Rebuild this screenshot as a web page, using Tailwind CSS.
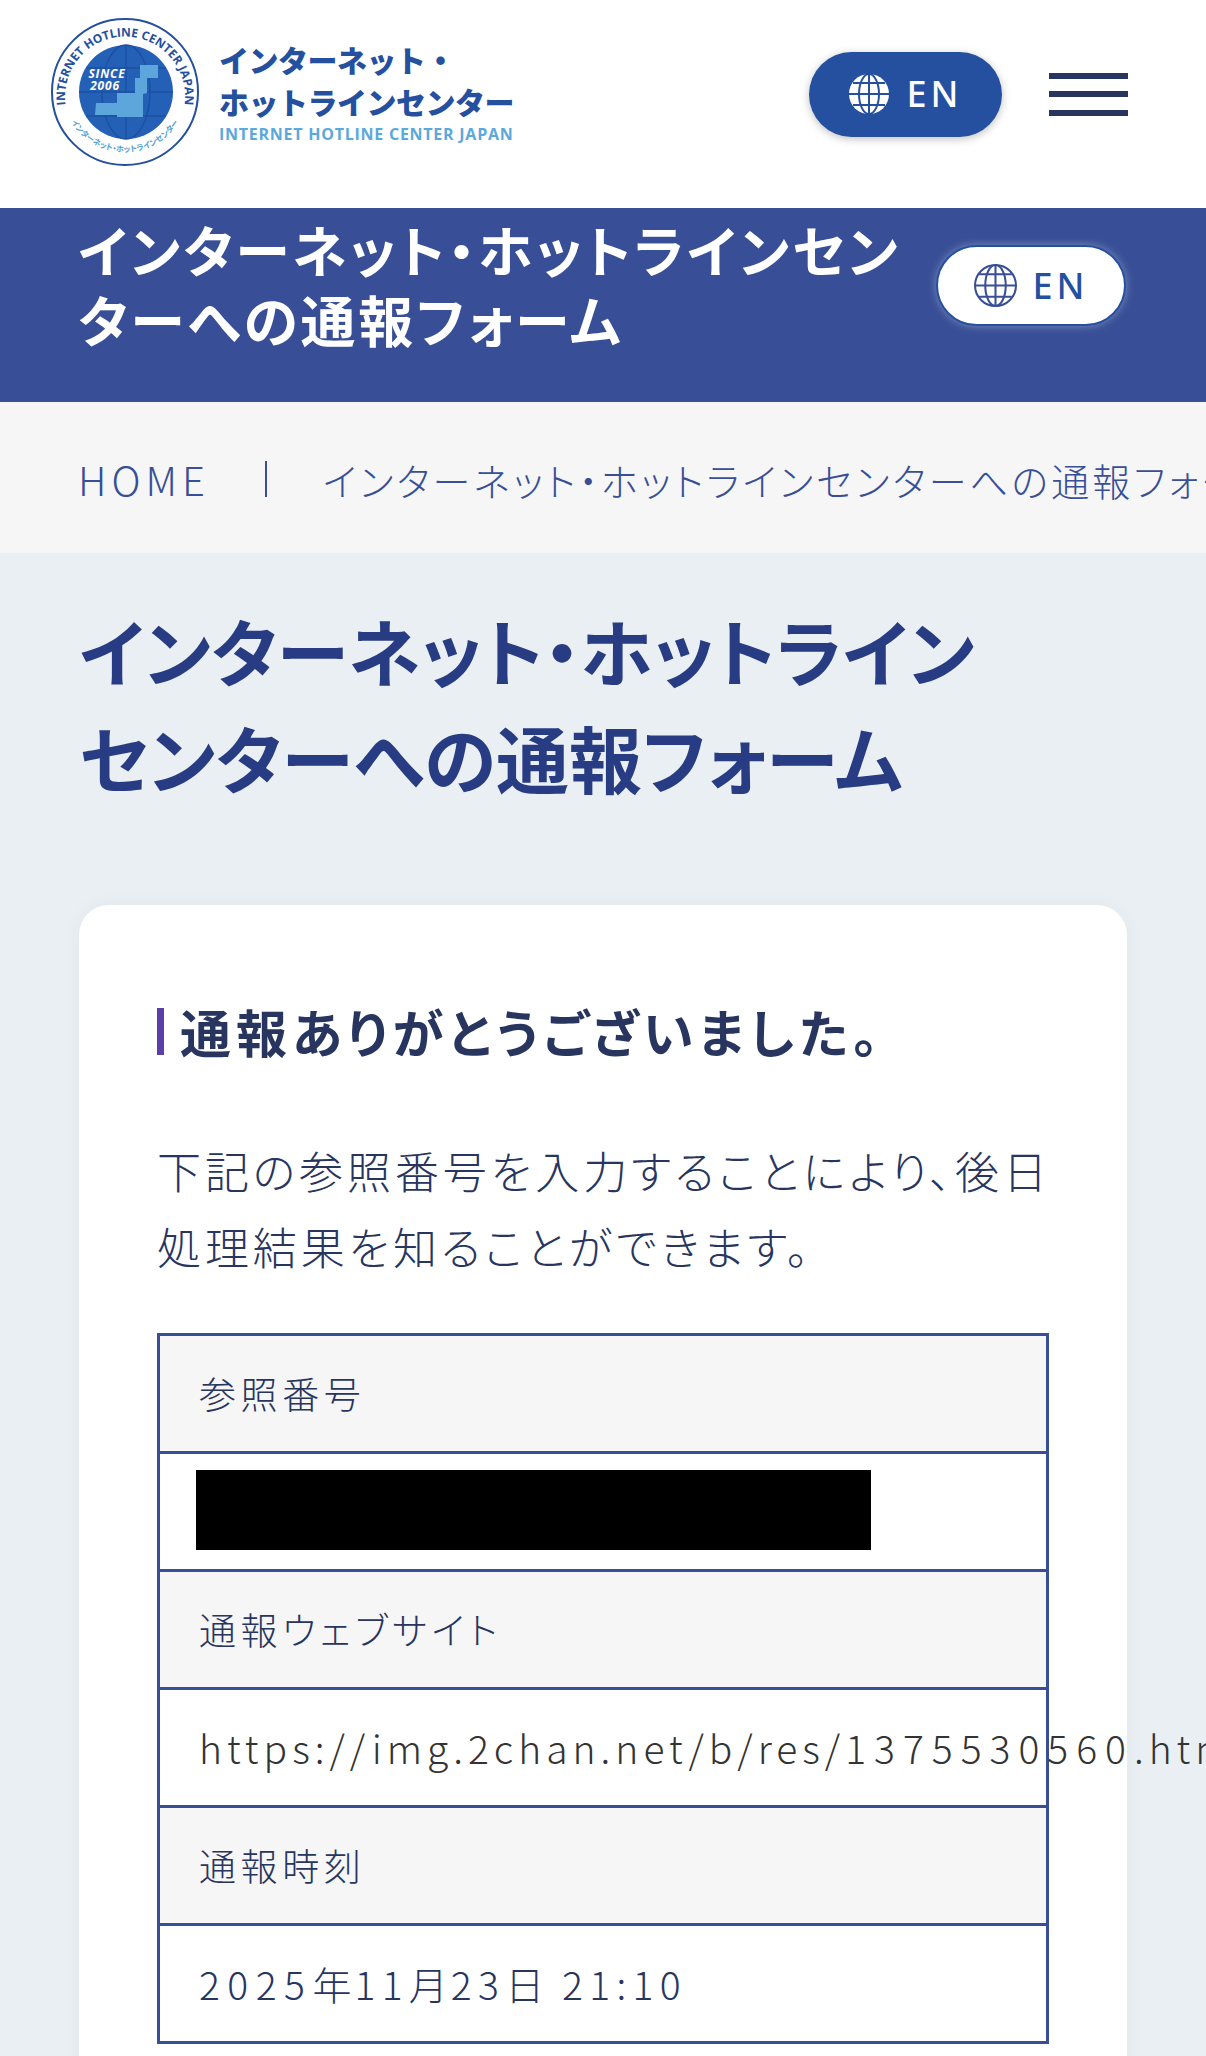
<!DOCTYPE html>
<html lang="ja"><head><meta charset="utf-8">
<script src="https://cdn.jsdelivr.net/npm/@tailwindcss/browser@4"></script>
</head>
<body class="w-[1206px] h-[2056px] overflow-hidden bg-[#eaeff4] font-['Noto_Sans_CJK_JP','Noto_Sans',sans-serif] text-[#27355f] [font-feature-settings:'palt']">
<header class="h-[208px] bg-white flex items-center pl-[50px] pr-[78px]">
  <div class="flex items-center gap-[19px] -mt-[22px]">
    <svg width="150" height="150" viewBox="0 0 150 150">
      <defs>
        <path id="ringtop" d="M17 94A60 60 0 1 1 133 94"/>
        <path id="ringbot" d="M19 100A63 63 0 0 0 131 100"/>
      </defs>
      <circle cx="75" cy="74" r="73" fill="#fff" stroke="#24509f" stroke-width="2"/>
      <circle cx="76" cy="74" r="47" fill="#2460b5"/>
      <g fill="none" stroke="#1d50a3" stroke-width="1.5"><ellipse cx="76" cy="74" rx="24" ry="47"/><path d="M76 27v94M29 74h94M36 50h80M36 98h80"/></g>
      <path d="M90 47h18v13H97v15l-4 1v23H67v-2H45l1-12h21V75h18V60h5z" fill="#5da6dc"/>
      <text x="57" y="60" text-anchor="middle" font-size="12" font-style="italic" font-weight="700" letter-spacing="0.8" fill="#fff" font-family="Open Sans">SINCE</text>
      <text x="55" y="72" text-anchor="middle" font-size="12" font-style="italic" font-weight="700" letter-spacing="0.8" fill="#fff" font-family="Open Sans">2006</text>
      <text font-size="12" font-weight="700" fill="#24509f" font-family="Open Sans"><textPath href="#ringtop" startOffset="50%" text-anchor="middle">INTERNET HOTLINE CENTER JAPAN</textPath></text>
      <text font-size="8" font-weight="700" fill="#4f9fd8"><textPath href="#ringbot" startOffset="50%" text-anchor="middle">インターネット・ホットラインセンター</textPath></text>
    </svg>
    <div class="flex flex-col [font-feature-settings:normal]">
      <div class="text-[30px] leading-[42px] font-black text-[#24509f] tracking-[-0.5px] -mt-[1px]">インターネット・</div>
      <div class="text-[30px] leading-[42px] font-black text-[#24509f] tracking-[-0.5px]">ホットラインセンター</div>
      <div class="text-[16px] leading-[25px] font-bold text-[#5aa9dc] tracking-[0.75px] font-['Open_Sans',sans-serif]">INTERNET HOTLINE CENTER JAPAN</div>
    </div>
  </div>
  <div class="ml-auto flex items-center gap-[47px] -mt-[20px]">
    <div class="w-[193px] h-[85px] rounded-full bg-[#24509f] shadow-[0_2px_8px_rgba(0,0,0,0.25)] flex items-center justify-center gap-[18px] text-white">
      <svg width="40" height="40" viewBox="0 0 40 40" fill="#fff" stroke="#24509f" stroke-width="2"><circle cx="20" cy="20" r="20" stroke="none"/><ellipse cx="20" cy="20" rx="10" ry="20"/><path d="M20 0v40M0 20h40M4 9h32M4 31h32"/></svg>
      <span class="text-[36px] leading-none font-medium tracking-[4px] font-['Noto_Sans',sans-serif]">EN</span>
    </div>
    <div class="w-[79px] h-[43px] flex flex-col justify-between"><i class="block h-[6px] bg-[#27355f]"></i><i class="block h-[6px] bg-[#27355f]"></i><i class="block h-[6px] bg-[#27355f]"></i></div>
  </div>
</header>
<section class="h-[194px] bg-[#384f97] flex items-start pl-[78px] pr-[80px] pt-[5px]">
  <div class="w-[830px] shrink-0 text-[55px] leading-[70px] font-bold tracking-[2.8px] text-white">インターネット・ホットラインセンターへの通報フォーム</div>
  <div class="ml-auto mt-[32px] w-[190px] h-[81px] rounded-full bg-white border-2 border-[#24509f] shadow-[0_0_8px_rgba(255,255,255,0.35)] flex items-center justify-center gap-[16px] text-[#24509f]">
    <svg width="43" height="43" viewBox="0 0 42 42" fill="none" stroke="#384f97" stroke-width="2"><circle cx="21" cy="21" r="20"/><ellipse cx="21" cy="21" rx="10" ry="20"/><path d="M21 1v40M1 21h40M5 10h32M5 32h32"/></svg>
    <span class="text-[36px] leading-none font-medium tracking-[4px] font-['Noto_Sans',sans-serif]">EN</span>
  </div>
</section>
<nav class="h-[151px] bg-[#f6f6f6] flex items-center pl-[78px] whitespace-nowrap overflow-hidden text-[#384f97] text-[38px] tracking-[3.2px] pt-[3px]">
  <span class="font-light text-[40px] tracking-[5px]">HOME</span>
  <span class="w-[2px] h-[36px] shrink-0 bg-[#384f97] ml-[55px] mr-[56px]"></span>
  <span class="font-light">インターネット・ホットラインセンターへの通報フォーム</span>
</nav>
<main class="px-[79px] pt-[43px]">
  <h1 class="text-[73px] leading-[107px] font-bold text-[#273c82] w-[960px]">インターネット・ホットラインセンターへの通報フォーム</h1>
  <div class="mt-[95px] bg-white rounded-[30px] h-[1200px] px-[78px] pt-[103px] shadow-[0_0_20px_rgba(0,0,0,0.04)]">
    <h2 class="border-l-[7px] border-[#5b3fa8] pl-[16px] text-[51px] leading-[47px] font-bold tracking-[5px] text-[#27355f]">通報ありがとうございました。</h2>
    <p class="mt-[77px] text-[44px] leading-[76px] font-light tracking-[3.9px] w-[905px]">下記の参照番号を入力することにより、後日処理結果を知ることができます。</p>
    <div class="mt-[49px] border-[3px] border-[#384f97] w-[892px] text-[37px] tracking-[4.6px] font-light whitespace-nowrap">
      <div class="h-[118px] bg-[#f6f6f6] flex items-center px-[39px] border-b-[3px] border-[#384f97]">参照番号</div>
      <div class="h-[118px] flex items-center px-[36px] border-b-[3px] border-[#384f97]"><div class="w-[675px] h-[80px] -mt-[3px] bg-black"></div></div>
      <div class="h-[118px] bg-[#f6f6f6] flex items-center px-[39px] border-b-[3px] border-[#384f97]">通報ウェブサイト</div>
      <div class="h-[118px] flex items-center px-[39px] border-b-[3px] border-[#384f97] text-[#333] text-[39px] tracking-[5px]"><span>https://img.2chan.net/b/res/</span><span class="tracking-[8px]">1375530560</span><span>.htm</span></div>
      <div class="h-[118px] bg-[#f6f6f6] flex items-center px-[39px] border-b-[3px] border-[#384f97]">通報時刻</div>
      <div class="h-[115px] flex items-center px-[39px] text-[39px] tracking-[6.3px]"><span><span class="tracking-[7.5px]">2025</span><span class="tracking-[3px]">年</span>11<span class="tracking-[3px]">月</span>23<span class="tracking-[3px]">日</span> 21:10</span></div>
    </div>
  </div>
</main>
</body></html>
